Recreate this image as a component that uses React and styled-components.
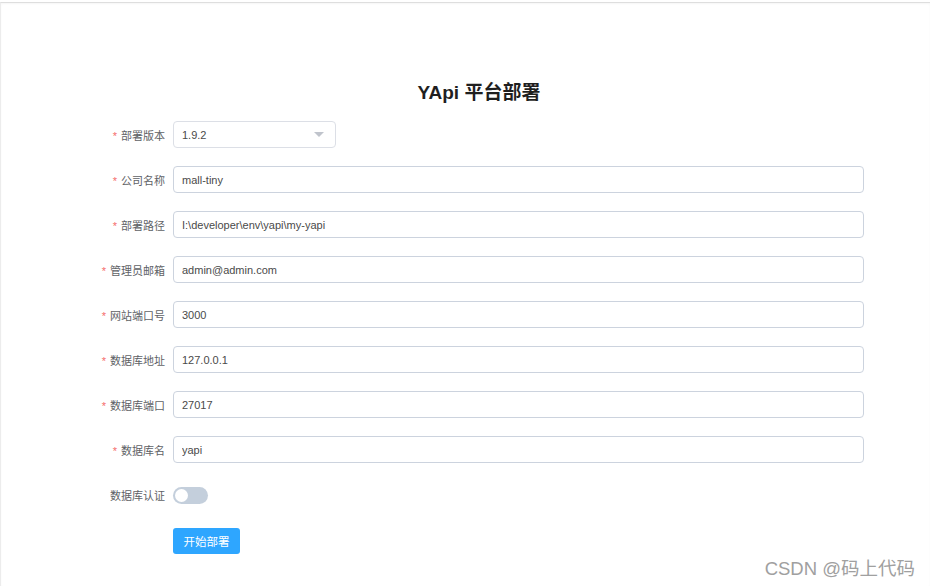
import React, { useState } from "react";
import styled, { createGlobalStyle } from "styled-components";

const GlobalStyle = createGlobalStyle`
  html, body {
    margin: 0;
    padding: 0;
    background: #fff;
    font-family: "Liberation Sans", "Noto Sans CJK SC", sans-serif;
  }
`;

const Page = styled.div`
  position: relative;
  height: 583px;
  margin-top: 2px;
  border-top: 1px solid #dedede;
  border-left: 1px solid #ececec;
  box-shadow: inset 0 1px 2px rgba(0, 0, 0, 0.04);
  overflow: hidden;
`;

const Form = styled.form`
  width: 774px;
  margin-left: 89px;
  padding-top: 76px;
`;

const Title = styled.h2`
  margin: 0 0 14px;
  padding-left: 4px;
  height: 28px;
  line-height: 28px;
  text-align: center;
  font-size: 19px;
  font-weight: 700;
  color: #1f1f1f;
`;

const Row = styled.div`
  display: grid;
  grid-template-columns: 75px 1fr;
  column-gap: 8px;
  align-items: center;
  height: 27px;
  margin-bottom: ${(p) => p.$gap || "18px"};
`;

const Label = styled.label`
  text-align: right;
  font-size: 11px;
  color: #606266;
  white-space: nowrap;
  &::before {
    content: ${(p) => (p.$required ? '"*"' : '""')};
    color: #f56c6c;
    margin-right: 4px;
  }
`;

const Input = styled.input`
  box-sizing: border-box;
  width: 100%;
  height: 27px;
  padding: 0 8px;
  border: 1px solid #ccd3de;
  border-radius: 4px;
  font-family: inherit;
  font-size: 11px;
  color: #4a4a4a;
  outline: none;
  background: #fff;
`;

const SelectBox = styled.div`
  box-sizing: border-box;
  width: 163px;
  height: 27px;
  padding: 0 8px;
  display: flex;
  align-items: center;
  justify-content: space-between;
  border: 1px solid #dcdfe6;
  border-radius: 4px;
  font-size: 11px;
  color: #4a4a4a;
`;

const Caret = styled.span`
  width: 0;
  height: 0;
  margin-right: 3px;
  border-left: 5px solid transparent;
  border-right: 5px solid transparent;
  border-top: 5px solid #c0c4cc;
`;

const Switch = styled.button`
  position: relative;
  display: block;
  width: 35px;
  height: 17px;
  margin-top: 2px;
  padding: 0;
  border: none;
  border-radius: 9px;
  background: ${(p) => (p.$on ? "#409eff" : "#c4cfdc")};
  cursor: pointer;
  &::after {
    content: "";
    position: absolute;
    top: 2px;
    left: ${(p) => (p.$on ? "20px" : "2px")};
    width: 13px;
    height: 13px;
    border-radius: 50%;
    background: #fff;
  }
`;

const Submit = styled.button`
  width: 67px;
  height: 26px;
  padding: 0;
  border: none;
  border-radius: 3px;
  background: #2ea6ff;
  color: #fff;
  font-family: inherit;
  font-size: 11.5px;
  cursor: pointer;
`;

const Watermark = styled.div`
  position: absolute;
  right: 15px;
  bottom: 6px;
  font-size: 18.5px;
  color: #a0a0a0;
`;

const fields = [
  { label: "公司名称", value: "mall-tiny" },
  { label: "部署路径", value: "I:\\developer\\env\\yapi\\my-yapi" },
  { label: "管理员邮箱", value: "admin@admin.com" },
  { label: "网站端口号", value: "3000" },
  { label: "数据库地址", value: "127.0.0.1" },
  { label: "数据库端口", value: "27017" },
  { label: "数据库名", value: "yapi" },
];

export default function App() {
  const [auth, setAuth] = useState(false);

  return (
    <>
      <GlobalStyle />
      <Page>
        <Form onSubmit={(e) => e.preventDefault()}>
          <Title>YApi 平台部署</Title>
          <Row>
            <Label $required>部署版本</Label>
            <SelectBox>
              1.9.2
              <Caret />
            </SelectBox>
          </Row>
          {fields.map((f) => (
            <Row key={f.label}>
              <Label $required>{f.label}</Label>
              <Input defaultValue={f.value} />
            </Row>
          ))}
          <Row $gap="19px">
            <Label>数据库认证</Label>
            <div>
              <Switch type="button" $on={auth} onClick={() => setAuth(!auth)} />
            </div>
          </Row>
          <Row>
            <span />
            <div>
              <Submit type="submit">开始部署</Submit>
            </div>
          </Row>
        </Form>
        <Watermark>CSDN @码上代码</Watermark>
      </Page>
    </>
  );
}
